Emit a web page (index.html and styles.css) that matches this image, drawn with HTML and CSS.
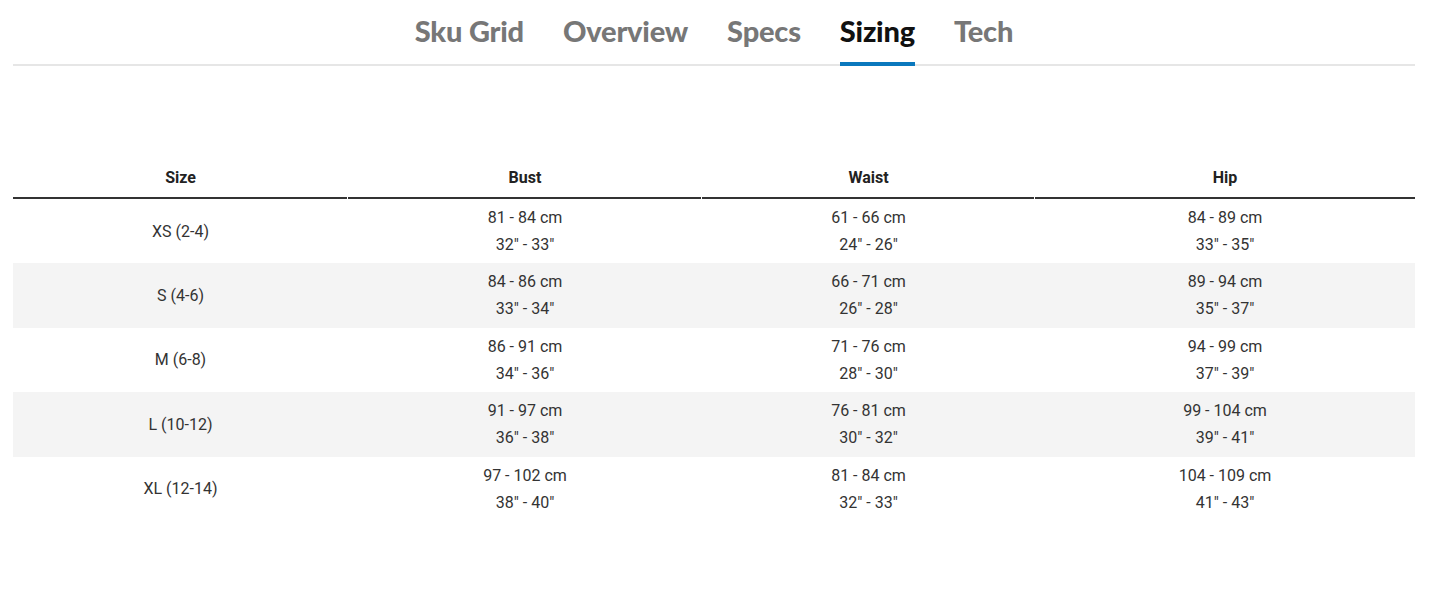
FILE: index.html
```html
<!DOCTYPE html>
<html lang="en">
<head>
<meta charset="utf-8">
<title>Sizing</title>
<link rel="stylesheet" href="styles.css">
</head>
<body>
<div class="page">
  <nav class="tabs">
    <a class="tab">Sku Grid</a>
    <a class="tab">Overview</a>
    <a class="tab">Specs</a>
    <a class="tab active">Sizing</a>
    <a class="tab">Tech</a>
  </nav>
  <table class="size-table">
    <colgroup>
      <col class="c1"><col class="c2"><col class="c3"><col class="c4">
    </colgroup>
    <thead>
      <tr><th>Size</th><th>Bust</th><th>Waist</th><th>Hip</th></tr>
    </thead>
    <tbody>
      <tr><td>XS (2-4)</td><td>81 - 84 cm<br>32" - 33"</td><td>61 - 66 cm<br>24" - 26"</td><td>84 - 89 cm<br>33" - 35"</td></tr>
      <tr><td>S (4-6)</td><td>84 - 86 cm<br>33" - 34"</td><td>66 - 71 cm<br>26" - 28"</td><td>89 - 94 cm<br>35" - 37"</td></tr>
      <tr><td>M (6-8)</td><td>86 - 91 cm<br>34" - 36"</td><td>71 - 76 cm<br>28" - 30"</td><td>94 - 99 cm<br>37" - 39"</td></tr>
      <tr><td>L (10-12)</td><td>91 - 97 cm<br>36" - 38"</td><td>76 - 81 cm<br>30" - 32"</td><td>99 - 104 cm<br>39" - 41"</td></tr>
      <tr><td>XL (12-14)</td><td>97 - 102 cm<br>38" - 40"</td><td>81 - 84 cm<br>32" - 33"</td><td>104 - 109 cm<br>41" - 43"</td></tr>
    </tbody>
  </table>
</div>
</body>
</html>
```

FILE: styles.css
```css
html, body {
  margin: 0;
  background: #fff;
}
.page {
  padding: 0 30px 0 13px;
  font-family: Roboto, "Liberation Sans", sans-serif;
  color: #333;
}
.tabs {
  display: flex;
  justify-content: center;
  gap: 39px;
  border-bottom: 2px solid #e6e6e6;
  height: 64px;
  box-sizing: content-box;
}
.tab {
  display: block;
  font-family: Lato, "Liberation Sans", sans-serif;
  font-weight: 900;
  font-size: 29px;
  line-height: 30px;
  padding-top: 16px;
  color: #777;
  letter-spacing: -0.2px;
}
.tab.active {
  color: #111;
  border-bottom: 4px solid #0a78bd;
  margin-bottom: -2px;
  box-sizing: border-box;
  height: 66px;
}
.size-table {
  width: 1402px;
  margin-top: 93px;
  table-layout: fixed;
  border-collapse: collapse;
  font-size: 16px;
}
.c1 { width: 335px; }
.c2 { width: 354px; }
.c3 { width: 333px; }
.c4 { width: 380px; }
.size-table th {
  font-weight: 700;
  padding: 8px 0 10px;
  line-height: 22px;
  color: #222;
  background: linear-gradient(#333, #333) left bottom / calc(100% - 1px) 2px no-repeat;
}
.size-table th:last-child {
  background-size: 100% 2px;
}
.size-table td {
  text-align: center;
  padding: 5px 0 5.4px;
  line-height: 27px;
  height: 54px;
}
.size-table tbody tr:nth-child(even) td {
  background: #f4f4f4;
}
```
